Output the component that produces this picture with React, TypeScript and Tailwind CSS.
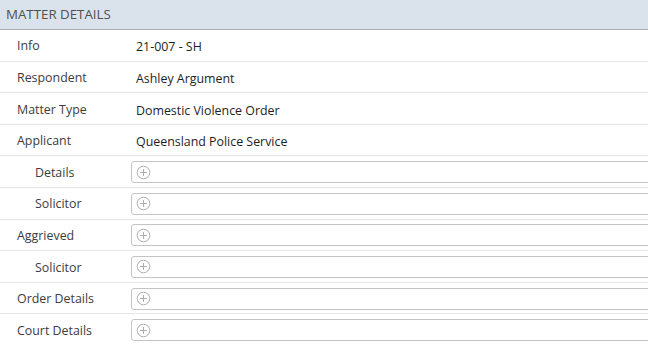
import React from "react";

type Row = { label: string; value?: string; indent?: boolean };

const rows: Row[] = [
  { label: "Info", value: "21-007 - SH" },
  { label: "Respondent", value: "Ashley Argument" },
  { label: "Matter Type", value: "Domestic Violence Order" },
  { label: "Applicant", value: "Queensland Police Service" },
  { label: "Details", indent: true },
  { label: "Solicitor", indent: true },
  { label: "Aggrieved" },
  { label: "Solicitor", indent: true },
  { label: "Order Details" },
  { label: "Court Details" },
];

function PlusIcon() {
  return (
    <svg width="15" height="15" viewBox="0 0 15 15" className="block">
      <circle cx="7.5" cy="7.5" r="6.3" fill="none" stroke="#aeaeae" strokeWidth="1" />
      <path d="M7.5 4v7M4 7.5h7" stroke="#aeaeae" strokeWidth="1" />
    </svg>
  );
}

export default function App() {
  return (
    <div
      className="w-[648px] h-[345px] overflow-hidden bg-white text-[12.4px] text-[#333]"
      style={{ fontFamily: '"Open Sans", "Noto Sans", Arial, sans-serif' }}
    >
      <div className="h-[30px] bg-[#dae3ec] border-b border-[#a9adb1] flex items-center pl-[6px] pt-[1px] text-[#505050] text-[13.3px]">
        MATTER DETAILS
      </div>
      {rows.map((r, i) => (
        <div
          key={i}
          className="h-[31.6px] border-b border-[#e6e6e6] flex items-center"
        >
          <div
            className={`w-[131px] shrink-0 pt-[3px] text-[#3c3c3c] ${r.indent ? "pl-[35px]" : "pl-[17px]"}`}
          >
            {r.label}
          </div>
          {r.value ? (
            <div className="pl-[5px] pt-[5px] text-[#1e1e1e]">{r.value}</div>
          ) : (
            <div className="flex-1 h-[22px] mt-[1px] mr-[-4px] border border-[#c4c4c4] rounded-[3px] flex items-center pl-[4px]">
              <PlusIcon />
            </div>
          )}
        </div>
      ))}
    </div>
  );
}
